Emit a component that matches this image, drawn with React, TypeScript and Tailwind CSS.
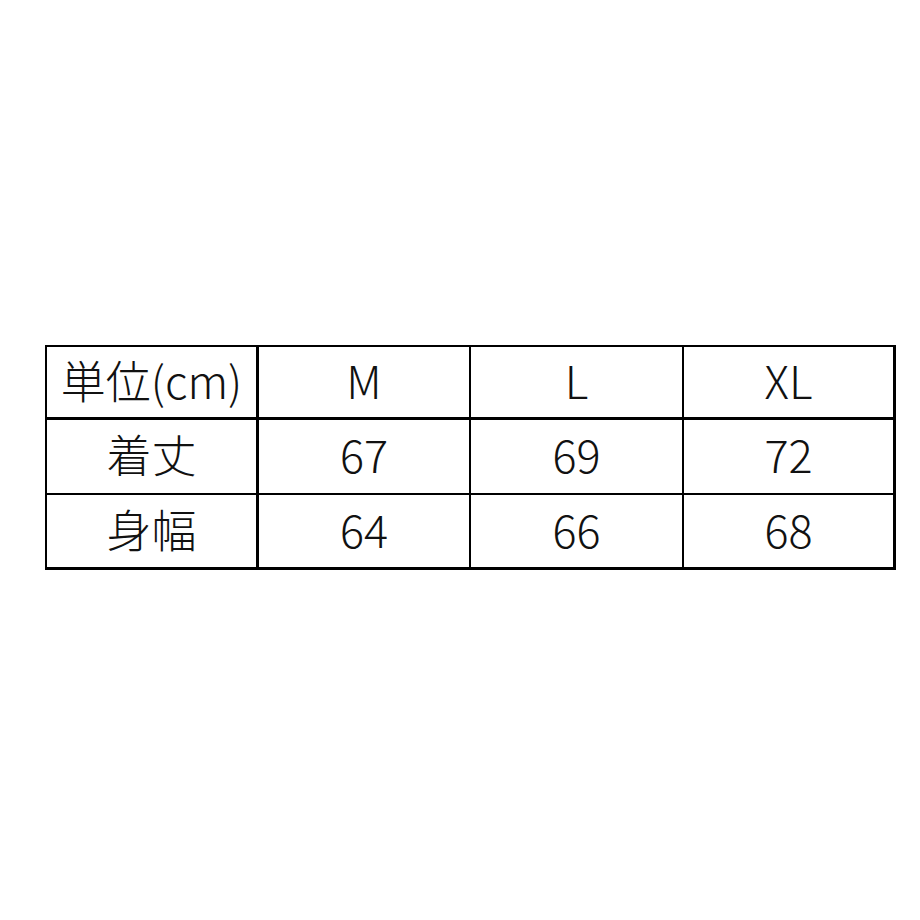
const header = ['単位(cm)', 'M', 'L', 'XL']
const rows = [
  ['着丈', '67', '69', '72'],
  ['身幅', '64', '66', '68'],
]

const colClass = [
  'w-[212px] border-r-[3px]',
  'w-[212px] border-r-2',
  'w-[213px] border-r-2',
  'w-[209px]',
]

function Row({ cells, className }: { cells: string[]; className: string }) {
  return (
    <div className={`flex border-black ${className}`}>
      {cells.map((c, i) => (
        <div
          key={i}
          className={`flex items-center justify-center border-black pb-[6px] ${colClass[i]}`}
        >
          {c}
        </div>
      ))}
    </div>
  )
}

export default function App() {
  return (
    <div className="min-h-[920px] w-[920px] bg-white pl-[45px] pt-[345px]">
      <div
        className="w-[851px] border-t-2 border-l-2 border-r-[3px] border-b-[3px] border-black text-[45px] font-light leading-none text-[#111]"
        style={{ fontFamily: '"Noto Sans CJK JP", "Noto Sans", sans-serif' }}
      >
        <Row cells={header} className="h-[73px] border-b-[3px]" />
        <Row cells={rows[0]} className="h-[75px] border-b-2" />
        <Row cells={rows[1]} className="h-[72px]" />
      </div>
    </div>
  )
}
